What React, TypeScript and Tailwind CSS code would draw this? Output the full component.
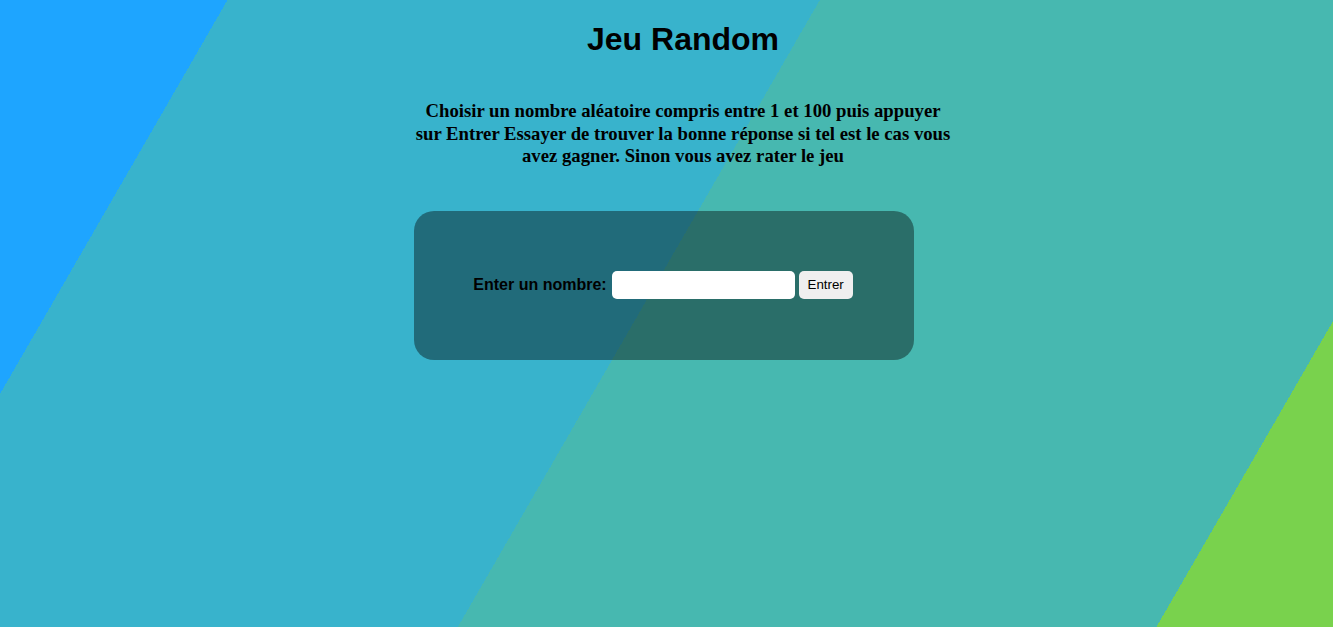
import React from 'react';

export default function App() {
  return (
    <div className="min-h-[627px] w-full bg-[linear-gradient(120deg,#1ea5ff_197px,#38b3cc_197px,#38b3cc_710px,#47b8b0_710px,#47b8b0_1315px,#79d24d_1315px)] pl-[33px]">
      <div className="mx-auto w-[540px] pt-[21px]">
        {/* Title */}
        <h1 className="text-center font-['Liberation_Sans',Arial,sans-serif] text-[32px] font-bold leading-[37px] text-black">
          Jeu Random
        </h1>

        {/* Rules */}
        <p className="mt-[42px] text-center font-['Liberation_Serif','Times_New_Roman',serif] text-[18.72px] font-bold leading-[22.5px] text-black">
          Choisir un nombre aléatoire compris entre 1 et 100 puis appuyer sur Entrer Essayer de trouver la bonne réponse si tel est le cas vous avez gagner. Sinon vous avez rater le jeu
        </p>

        {/* Form card */}
        <div className="ml-px mt-[43px] flex h-[149px] w-[500px] items-center justify-center rounded-[20px] bg-black/40 pr-[2px]">
          <label className="font-['Liberation_Sans',Arial,sans-serif] text-[16px] font-bold text-black">
            Enter un nombre:
          </label>
          <input
            type="text"
            className="ml-[5px] h-[28px] w-[183px] rounded-[5px] border-0 bg-white px-2 outline-none"
          />
          <button className="ml-[4px] h-[28px] w-[54px] rounded-[5px] bg-[#efefef] font-['Liberation_Sans',Arial,sans-serif] text-[13.33px] leading-[28px] text-black">
            Entrer
          </button>
        </div>
      </div>
    </div>
  );
}
